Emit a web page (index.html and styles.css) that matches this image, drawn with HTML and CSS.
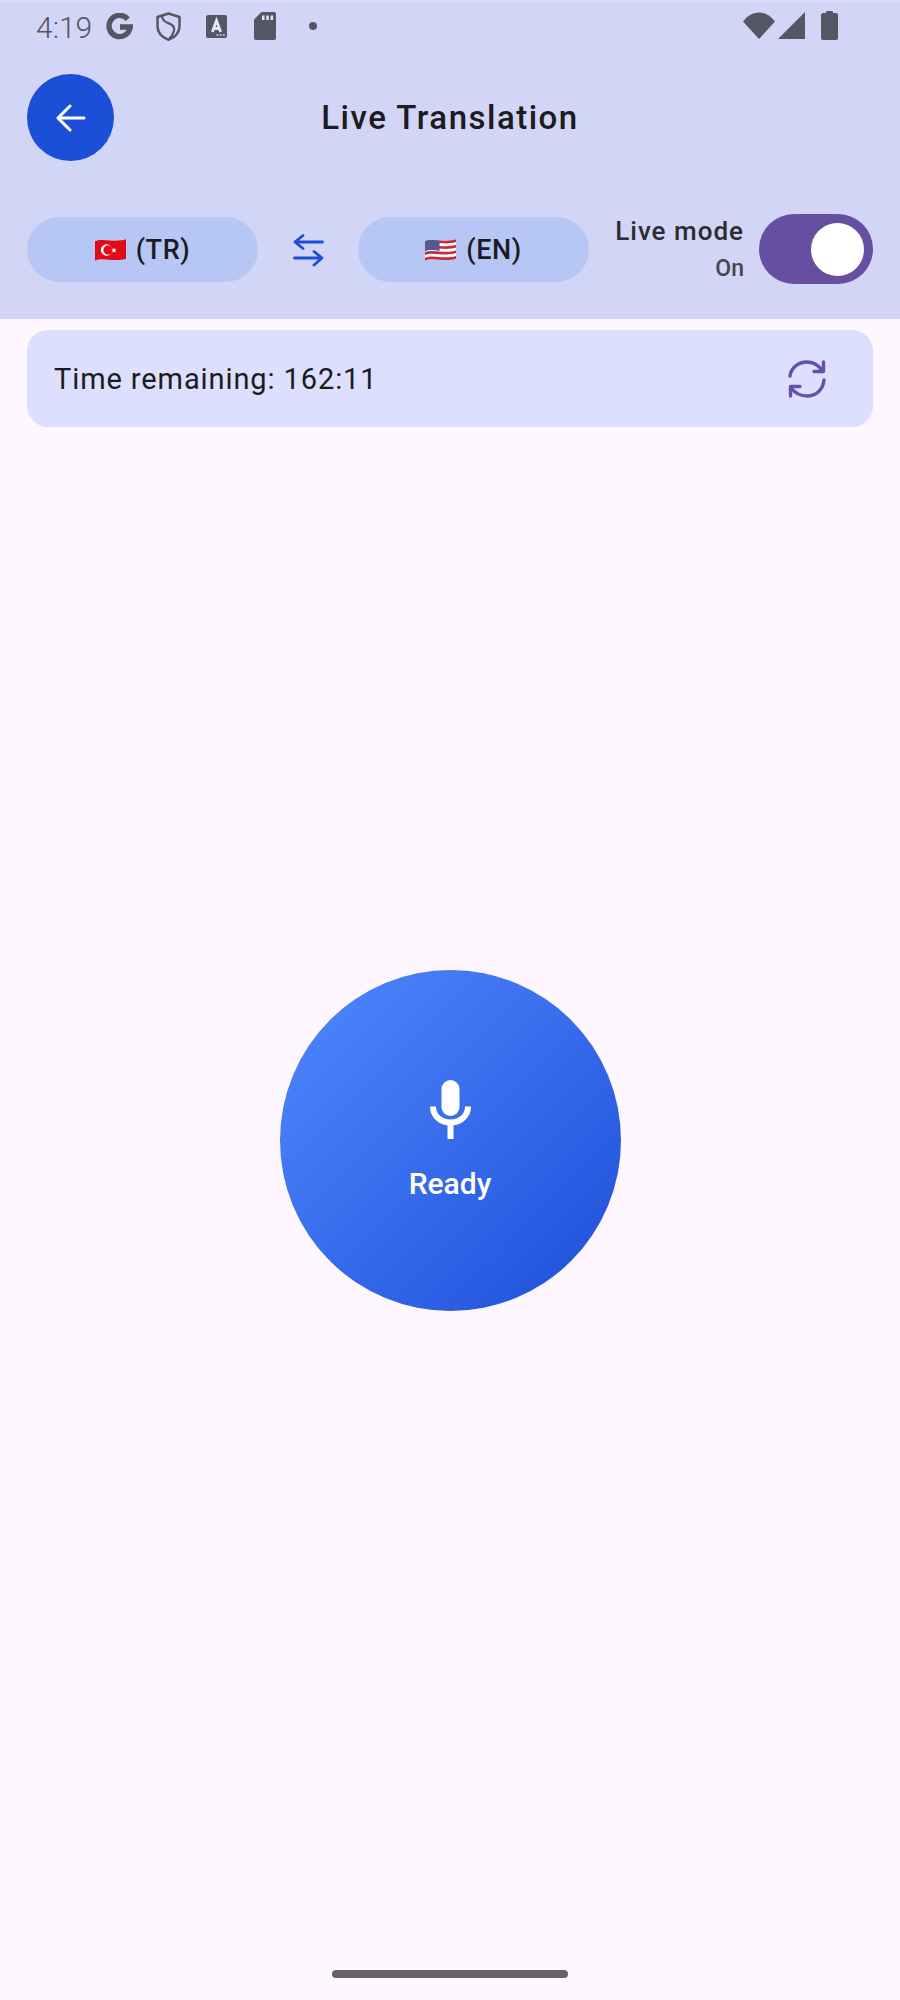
FILE: index.html
```html
<!DOCTYPE html>
<html lang="en">
<head>
<meta charset="utf-8">
<title>Live Translation</title>
<link rel="stylesheet" href="styles.css">
</head>
<body>
<div class="screen">
  <header class="header">
    <div class="status">
      <span class="clock">4:19</span>
      <svg class="i-g" viewBox="0 0 27 27"><path d="M21.800 6.200A10.600 10.600 0 1 0 24.200 14H14" fill="none" stroke="#555663" stroke-width="5.400"/></svg>
      <svg class="i-shield" viewBox="0 0 25 29"><path d="M12.500 1.500 23.500 5V14C23.500 21 18.500 25.500 12.500 27.800 6.500 25.500 1.500 21 1.500 14V5Z" fill="none" stroke="#555663" stroke-width="2.500" stroke-linejoin="round"/><path d="M6 3.500C6 10 12 10.500 16 13 20 16 18 22 13 27" fill="none" stroke="#555663" stroke-width="2.200"/></svg>
      <svg class="i-a" viewBox="0 0 21 23"><rect width="21" height="23" rx="2" fill="#555663"/><path d="M6.300 17 10.500 5.500 14.700 17M7.500 13.500H13.500" fill="none" stroke="#e4e6fb" stroke-width="2.800"/><path d="M10.500 20h1.800M13.700 20h1.800M16.900 20h1.800" stroke="#d3d6f6" stroke-width="1.600"/></svg>
      <svg class="i-sd" viewBox="0 0 22 28"><path d="M7.500 0H20A2 2 0 0 1 22 2V26A2 2 0 0 1 20 28H2A2 2 0 0 1 0 26V7.500Z" fill="#555663"/><path d="M8 3.500h2.500v4.500H8zM12.300 3.500h2.500v4.500h-2.500zM16.600 3.500h2.500v4.500h-2.500z" fill="#e4e6fb"/></svg>
      <span class="dot"></span>
      <span class="spacer"></span>
      <svg class="i-wifi" viewBox="0 0 32 27"><path d="M0 9.500C9 -2.500 23 -2.500 32 9.500L16 27Z" fill="#555663"/></svg>
      <svg class="i-signal" viewBox="0 0 27 27"><path d="M27 0V27H0Z" fill="#555663"/></svg>
      <svg class="i-batt" viewBox="0 0 17 29"><path d="M5 2V1A1 1 0 0 1 6 0H11A1 1 0 0 1 12 1V2H15A2 2 0 0 1 17 4V27A2 2 0 0 1 15 29H2A2 2 0 0 1 0 27V4A2 2 0 0 1 2 2Z" fill="#555663"/></svg>
    </div>
    <div class="appbar">
      <button class="back" aria-label="Back">
        <svg viewBox="0 0 30 28"><path d="M28 14H2.500M14 2 2 14 14 26" fill="none" stroke="#fff" stroke-width="3" stroke-linecap="round" stroke-linejoin="round"/></svg>
      </button>
      <h1 class="title">Live Translation</h1>
      <span class="appbar-end"></span>
    </div>
    <div class="controls">
      <button class="pill">
        <svg class="flag" viewBox="0 0 32 24"><path d="M0 3C8 -1 20 5 32 1V21C20 25 8 19 0 23Z" fill="#e30a17"/><circle cx="12" cy="12" r="6" fill="#fff"/><circle cx="13.500" cy="12" r="4.800" fill="#e30a17"/><path d="M19.500 9.500 20.300 11.300 22.300 11.500 20.800 12.800 21.300 14.700 19.500 13.700 17.800 14.700 18.300 12.800 16.800 11.500 18.800 11.300Z" fill="#fff"/></svg>
        <span>(TR)</span>
      </button>
      <span class="swap">
        <svg viewBox="0 0 31 33"><path d="M29.500 8H2M10 1.500 2 8 10 14.500M1.500 24H29M21 17.500 29 24 21 31" fill="none" stroke="#1b4fd8" stroke-width="2.800" stroke-linecap="round" stroke-linejoin="round"/></svg>
      </span>
      <button class="pill">
        <svg class="flag" viewBox="0 0 32 24"><path d="M0 3C8 -1 20 5 32 1V21C20 25 8 19 0 23Z" fill="#fff"/><path d="M0 3C8 -1 20 5 32 1V3.800C20 7.800 8 1.800 0 5.800ZM0 8.700C8 4.700 20 10.700 32 6.700V9.500C20 13.500 8 7.500 0 11.500ZM0 14.400C8 10.400 20 16.400 32 12.400V15.200C20 19.200 8 13.200 0 17.200ZM0 20.100C8 16.100 20 22.100 32 18.100V21C20 25 8 19 0 23Z" fill="#c8283c"/><path d="M0 3C4 1 10 1.500 15 2.500V13C10 12 4 11.500 0 13.500Z" fill="#54598f"/></svg>
        <span>(EN)</span>
      </button>
      <div class="live">
        <span class="live-label">Live mode</span>
        <span class="live-state">On</span>
      </div>
      <span class="switch"><span class="thumb"></span></span>
    </div>
  </header>
  <main class="main">
    <section class="timer">
      <span class="timer-text">Time remaining: 162:11</span>
      <svg class="refresh" viewBox="0 0 40 40"><path d="M3 17C4 9 11 3 20 3 26 3 31 6 35 11M37 21C36 31 29 37 20 37 14 37 8 34 4 29M36.500 3V12.500H27M3.500 37V27.500H13" fill="none" stroke="#6650a8" stroke-width="3.400" stroke-linecap="round" stroke-linejoin="round"/></svg>
    </section>
    <button class="mic">
      <svg class="mic-icon" viewBox="0 0 41 59"><rect x="11.500" y="0" width="18" height="36" rx="9" fill="#fff"/><path d="M3 26.500C3 36 10.500 42.500 20.500 42.500S38 36 38 26.500M20.500 42.500V59" fill="none" stroke="#fff" stroke-width="6"/></svg>
      <span class="mic-label">Ready</span>
    </button>
  </main>
  <div class="home"></div>
</div>
</body>
</html>
```
FILE: styles.css
```css
* { box-sizing: border-box; }
html, body { margin: 0; padding: 0; }
body { font-family: Roboto, "Noto Sans", sans-serif; background: #fef7ff; }
button { border: 0; padding: 0; font: inherit; color: inherit; }
.screen { width: 900px; height: 2000px; display: flex; flex-direction: column; background: #fef7ff; }

.header { height: 319px; flex: none; background: #d2d5f5; border-top: 2px solid #d9dcfa; }

.status { height: 72px; display: flex; align-items: flex-start; padding: 9px 62px 0 36px; color: #555663; }
.clock { font-size: 30px; font-weight: 300; line-height: 33px; width: 70px; flex: none; }
.status svg { display: block; flex: none; }
.i-g { width: 27px; height: 27px; margin-top: 2px; }
.i-shield { width: 25px; height: 29px; margin: 1px 0 0 23px; }
.i-a { width: 21px; height: 23px; margin: 4px 0 0 25px; }
.i-sd { width: 22px; height: 28px; margin: 1px 0 0 27px; }
.dot { width: 8px; height: 8px; border-radius: 50%; background: #555663; margin: 11px 0 0 33px; flex: none; }
.spacer { flex: 1; }
.i-wifi { width: 32px; height: 27px; margin-top: 1px; }
.i-signal { width: 27px; height: 27px; margin: 1px 0 0 3px; }
.i-batt { width: 17px; height: 29px; margin: 0 0 0 16px; }

.appbar { height: 87px; padding: 0 27px; display: grid; grid-template-columns: 87px 1fr 87px; align-items: center; }
.back { width: 87px; height: 87px; border-radius: 50%; background: #1b4fd8; display: flex; align-items: center; justify-content: center; }
.back svg { width: 30px; height: 28px; display: block; }
.title { margin: 0; text-align: center; font-size: 33px; font-weight: 500; letter-spacing: 1.5px; color: #1b1b21; }

.controls { margin-top: 53px; height: 70px; padding: 0 27px; display: flex; align-items: center; }
.pill { width: 231px; height: 65px; margin-top: 1px; flex: none; border-radius: 33px; background: #b7c7f5; display: flex; align-items: center; justify-content: center; gap: 10px; font-size: 27px; font-weight: 500; letter-spacing: 0.6px; color: #1b1b21; }
.flag { width: 31px; height: 24px; display: block; flex: none; }
.swap { width: 100px; margin-top: 2px; flex: none; display: flex; justify-content: center; }
.swap svg { width: 31px; height: 33px; display: block; }
.live { width: 155px; flex: none; display: flex; flex-direction: column; align-items: flex-end; }
.live-label { font-size: 26px; font-weight: 500; letter-spacing: 1px; line-height: 34px; color: #2c2c34; }
.live-state { font-size: 23px; font-weight: 500; line-height: 30px; margin-top: 6px; color: #46464f; }
.switch { width: 114px; height: 70px; margin-left: 15px; flex: none; border-radius: 35px; background: #664ea0; display: flex; align-items: center; justify-content: flex-end; padding-right: 9px; }
.thumb { width: 53px; height: 53px; border-radius: 50%; background: #fff; display: block; }

.main { flex: 1; display: flex; flex-direction: column; align-items: center; padding: 11px 27px 0; }
.timer { width: 846px; height: 97px; flex: none; border-radius: 21px; background: #dcdffe; display: flex; align-items: center; justify-content: space-between; padding: 0 46px 0 27px; }
.timer-text { font-size: 29px; letter-spacing: 0.9px; color: #1b1b21; }
.refresh { width: 40px; height: 40px; display: block; flex: none; }

.mic { width: 341px; height: 341px; margin-top: 543px; flex: none; border-radius: 50%; background: linear-gradient(135deg, #5189ff, #1d4ed8); display: flex; flex-direction: column; align-items: center; justify-content: center; color: #fff; }
.mic-icon { width: 41px; height: 59px; display: block; }
.mic-label { font-size: 30px; font-weight: 500; line-height: 36px; margin-top: 27px; color: #fff; }

.home { width: 236px; height: 8px; margin: 0 auto 22px; flex: none; border-radius: 4px; background: #656266; }
```
